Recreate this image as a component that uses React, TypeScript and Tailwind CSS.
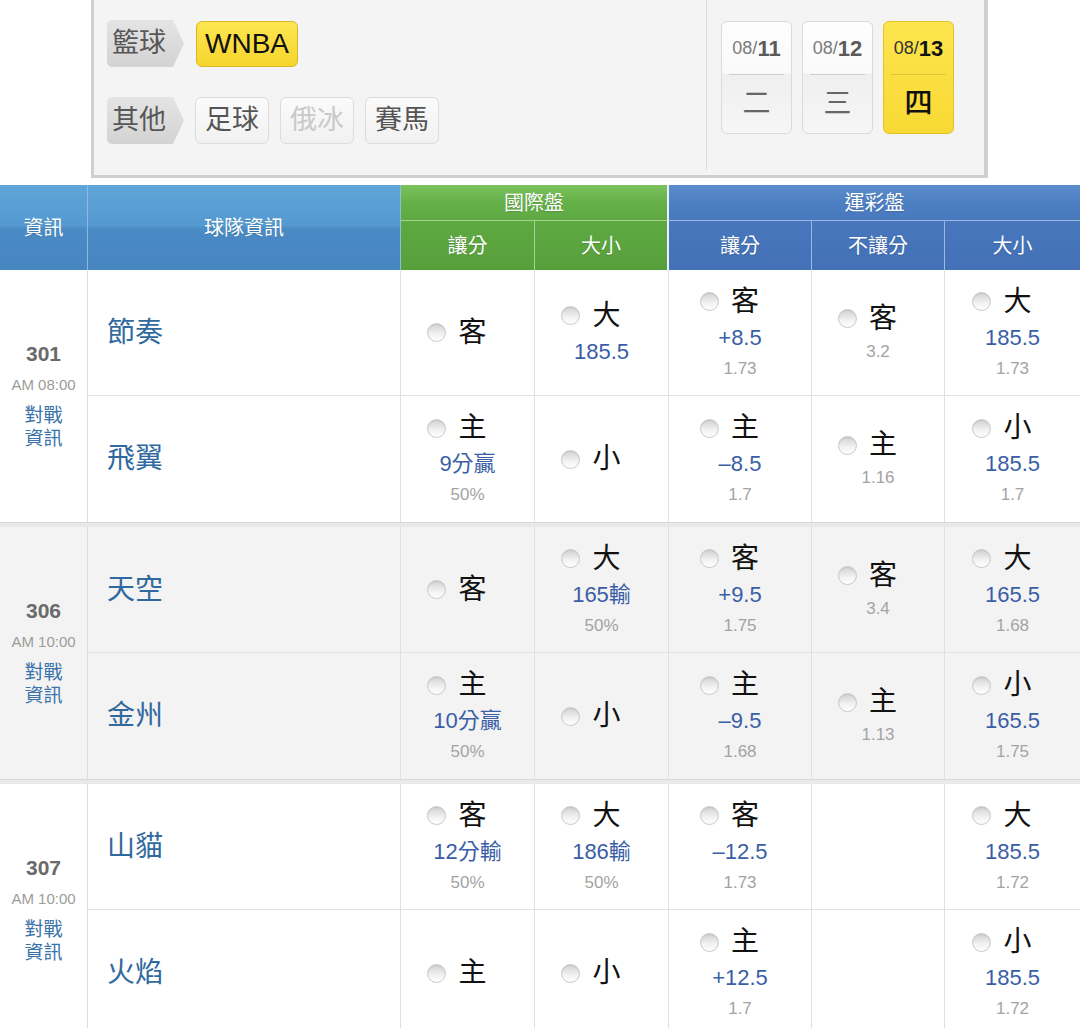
import React from "react";

type Cell = { label?: string; value?: string; odds?: string } | null;
type Team = { name: string; cells: Cell[] };
type Game = { no: string; time: string; gray: boolean; teams: Team[] };

const games: Game[] = [
  {
    no: "301",
    time: "AM 08:00",
    gray: false,
    teams: [
      {
        name: "節奏",
        cells: [
          { label: "客" },
          { label: "大", value: "185.5" },
          { label: "客", value: "+8.5", odds: "1.73" },
          { label: "客", odds: "3.2" },
          { label: "大", value: "185.5", odds: "1.73" },
        ],
      },
      {
        name: "飛翼",
        cells: [
          { label: "主", value: "9分贏", odds: "50%" },
          { label: "小" },
          { label: "主", value: "–8.5", odds: "1.7" },
          { label: "主", odds: "1.16" },
          { label: "小", value: "185.5", odds: "1.7" },
        ],
      },
    ],
  },
  {
    no: "306",
    time: "AM 10:00",
    gray: true,
    teams: [
      {
        name: "天空",
        cells: [
          { label: "客" },
          { label: "大", value: "165輸", odds: "50%" },
          { label: "客", value: "+9.5", odds: "1.75" },
          { label: "客", odds: "3.4" },
          { label: "大", value: "165.5", odds: "1.68" },
        ],
      },
      {
        name: "金州",
        cells: [
          { label: "主", value: "10分贏", odds: "50%" },
          { label: "小" },
          { label: "主", value: "–9.5", odds: "1.68" },
          { label: "主", odds: "1.13" },
          { label: "小", value: "165.5", odds: "1.75" },
        ],
      },
    ],
  },
  {
    no: "307",
    time: "AM 10:00",
    gray: false,
    teams: [
      {
        name: "山貓",
        cells: [
          { label: "客", value: "12分輸", odds: "50%" },
          { label: "大", value: "186輸", odds: "50%" },
          { label: "客", value: "–12.5", odds: "1.73" },
          null,
          { label: "大", value: "185.5", odds: "1.72" },
        ],
      },
      {
        name: "火焰",
        cells: [
          { label: "主" },
          { label: "小" },
          { label: "主", value: "+12.5", odds: "1.7" },
          null,
          { label: "小", value: "185.5", odds: "1.72" },
        ],
      },
    ],
  },
];

function Radio() {
  return (
    <div className="w-[19px] h-[19px] rounded-full border border-[#cacaca] bg-[linear-gradient(to_bottom,#d2d2d2,#f2f2f2_60%,#ffffff)] shadow-[inset_0_1px_1px_rgba(0,0,0,0.08)]" />
  );
}

function OddsCell({ cell, last }: { cell: Cell; last: boolean }) {
  return (
    <div
      className={`flex flex-col items-center justify-center ${
        last ? "" : "border-r border-[#e0e0e0]"
      }`}
    >
      {cell && cell.label && (
        <div className="flex items-center h-[38px] pr-[21px]">
          <Radio />
          <span className="ml-[12px] text-[28px] leading-[38px] text-[#111]">{cell.label}</span>
        </div>
      )}
      {cell && cell.value && (
        <div className="h-[34px] leading-[34px] text-[22px] text-[#3a5ea6]">{cell.value}</div>
      )}
      {cell && cell.odds && (
        <div className="h-[28px] leading-[28px] text-[17px] text-[#a3a3a3]">{cell.odds}</div>
      )}
    </div>
  );
}

function GameGroup({ game }: { game: Game }) {
  return (
    <div className={`grid grid-cols-[88px_992px] ${game.gray ? "bg-[#f3f3f3]" : "bg-white"}`}>
      <div className="flex flex-col items-center justify-center border-r border-[#dcdcdc] pb-[6px]">
        <div className="h-[34px] leading-[34px] text-[21px] font-bold text-[#6a6a6a]">{game.no}</div>
        <div className="h-[28px] leading-[28px] text-[15px] text-[#9c9c9c]">{game.time}</div>
        <div className="mt-[5px] text-[19px] leading-[23px] text-[#3a72aa] text-center">
          對戰
          <br />
          資訊
        </div>
      </div>
      <div className="flex flex-col">
        {game.teams.map((t, i) => (
          <div
            key={t.name}
            className={`grid grid-cols-[313px_134px_134px_143px_133px_135px] h-[126px] ${
              i === 0 ? "border-b border-[#e2e2e2]" : ""
            }`}
          >
            <div className="flex items-center pl-[19px] border-r border-[#e0e0e0] text-[28px] text-[#30699e]">
              {t.name}
            </div>
            {t.cells.map((c, j) => (
              <OddsCell key={j} cell={c} last={j === t.cells.length - 1} />
            ))}
          </div>
        ))}
      </div>
    </div>
  );
}

function Tag({ text }: { text: string }) {
  return (
    <div className="w-[77px] h-[47px] pl-[5px] flex items-center rounded-l-[5px] bg-[linear-gradient(to_bottom,#e4e4e4,#d3d3d3)] text-[27px] text-[#575757] [clip-path:polygon(0_0,calc(100%-11px)_0,100%_50%,calc(100%-11px)_100%,0_100%)]">
      {text}
    </div>
  );
}

function SportBtn({ text, disabled }: { text: string; disabled?: boolean }) {
  return (
    <div
      className={`w-[74px] h-[47px] flex items-center justify-center rounded-[6px] border border-[#dcdcdc] bg-[linear-gradient(to_bottom,#fbfbfb,#f1f1f1)] text-[27px] ${
        disabled ? "text-[#c9c9c9]" : "text-[#555]"
      }`}
    >
      {text}
    </div>
  );
}

function DateCard({ d, w, active }: { d: string; w: string; active?: boolean }) {
  return (
    <div
      className={`w-[71px] h-[113px] rounded-[6px] border flex flex-col overflow-hidden ${
        active
          ? "border-[#e2c22a] bg-[linear-gradient(to_bottom,#fde54e,#f8d934)]"
          : "border-[#dadada] bg-[linear-gradient(to_bottom,#fdfdfd_0%,#fafafa_46%,#efefef_47%,#f6f6f6_100%)]"
      }`}
    >
      <div className="h-[52px] flex items-center justify-center">
        <span className={`text-[18px] ${active ? "text-[#333]" : "text-[#7a7a7a]"}`}>08/</span>
        <span className={`text-[22px] font-bold ${active ? "text-[#111]" : "text-[#5a5a5a]"}`}>{d}</span>
      </div>
      <div className={`mx-[7px] h-px ${active ? "bg-[#e0c437]" : "bg-[#cfcfcf]"}`} />
      <div
        className={`flex-1 flex items-center justify-center text-[28px] ${
          active ? "text-[#111] font-medium" : "text-[#666]"
        }`}
      >
        {w}
      </div>
    </div>
  );
}

export default function App() {
  return (
    <div
      className="w-[1080px] h-[1028px] overflow-hidden bg-white"
      style={{ fontFamily: '"Liberation Sans", "Noto Sans CJK TC", sans-serif' }}
    >
      {/* Top filter panel */}
      <div className="flex h-[185px] bg-white">
        <div className="w-[91px]" />
        <div className="w-[897px] h-[178px] bg-[#f4f4f4] border-l-[3px] border-r-[4px] border-b-[3px] border-[#cfcfcf] flex">
          <div className="w-[613px] h-[170px] border-r border-[#dedede] pl-[13px] pt-[20px] flex flex-col gap-[30px]">
            <div className="flex items-center gap-[12px]">
              <Tag text="籃球" />
              <div className="h-[46px] px-[8px] flex items-center rounded-[6px] border border-[#d8b626] bg-[linear-gradient(to_bottom,#fde650,#f6d52e)] text-[28px] text-[#111]">
                WNBA
              </div>
            </div>
            <div className="flex items-center">
              <Tag text="其他" />
              <div className="flex gap-[11px] ml-[11px]">
                <SportBtn text="足球" />
                <SportBtn text="俄冰" disabled />
                <SportBtn text="賽馬" />
              </div>
            </div>
          </div>
          <div className="flex-1 pl-[14px] pt-[21px] flex gap-[10px] items-start">
            <DateCard d="11" w="二" />
            <DateCard d="12" w="三" />
            <DateCard d="13" w="四" active />
          </div>
        </div>
      </div>

      {/* Table header */}
      <div className="grid grid-cols-[88px_313px_134px_134px_143px_133px_135px] grid-rows-[36px_49px] text-white text-[20px] [text-shadow:0_1px_1px_rgba(0,0,0,0.15)]">
        <div className="row-span-2 flex items-center justify-center border-r border-[#8dbbe0] bg-[linear-gradient(to_bottom,#5fa5d9,#5499d0_48%,#4a8bc5_52%,#4785c0)]">
          資訊
        </div>
        <div className="row-span-2 flex items-center justify-center border-r border-[#8dbbe0] bg-[linear-gradient(to_bottom,#5fa5d9,#5499d0_48%,#4a8bc5_52%,#4785c0)]">
          球隊資訊
        </div>
        <div className="col-span-2 flex items-center justify-center border-b border-[#a7d391] border-r-2 border-r-[#e8f2f8] bg-[linear-gradient(to_bottom,#7cc25d,#66b049_50%,#5fa943)]">
          國際盤
        </div>
        <div className="col-span-3 flex items-center justify-center border-b border-[#9db7dd] bg-[linear-gradient(to_bottom,#5b8ccb,#4d7fc3_50%,#4879be)]">
          運彩盤
        </div>
        <div className="flex items-center justify-center border-r border-[#a7d391] bg-[linear-gradient(to_bottom,#5ea942,#579f3b)]">
          讓分
        </div>
        <div className="flex items-center justify-center border-r-2 border-[#e8f2f8] bg-[linear-gradient(to_bottom,#5ea942,#579f3b)]">
          大小
        </div>
        <div className="flex items-center justify-center border-r border-[#9db7dd] bg-[linear-gradient(to_bottom,#4877bd,#4370b6)]">
          讓分
        </div>
        <div className="flex items-center justify-center border-r border-[#9db7dd] bg-[linear-gradient(to_bottom,#4877bd,#4370b6)]">
          不讓分
        </div>
        <div className="flex items-center justify-center bg-[linear-gradient(to_bottom,#4877bd,#4370b6)]">
          大小
        </div>
      </div>

      {/* Body */}
      <div className="flex flex-col">
        {games.map((g, i) => (
          <React.Fragment key={g.no}>
            {i > 0 && <div className="h-[5px] bg-[#e9e9e9] border-t border-[#d9d9d9]" />}
            <GameGroup game={g} />
          </React.Fragment>
        ))}
      </div>
    </div>
  );
}
